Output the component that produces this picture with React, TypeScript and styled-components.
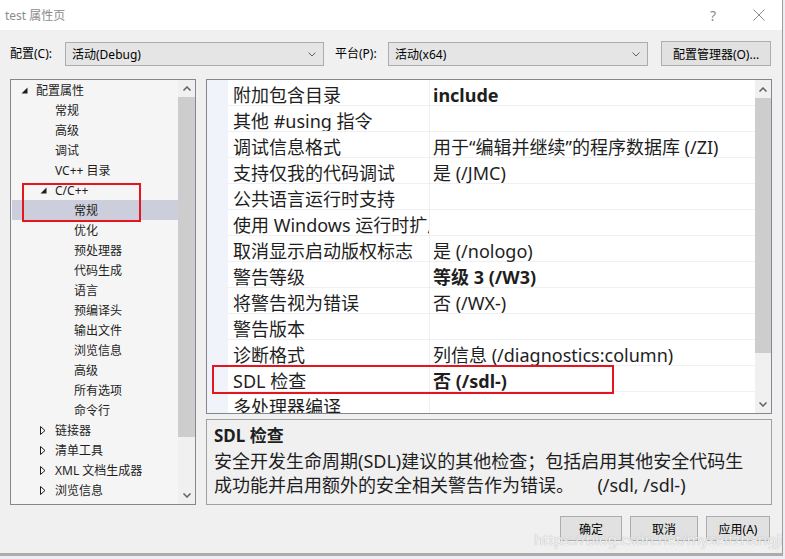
import React from "react";
import styled, { createGlobalStyle } from "styled-components";

const GlobalStyle = createGlobalStyle`
  html, body {
    margin: 0;
    padding: 0;
    background: #eceef3;
  }
  body {
    font-family: "Noto Sans", "Noto Sans CJK SC", sans-serif;
    color: #000;
  }
`;

const Dialog = styled.div`
  position: relative;
  width: 783px;
  height: 556px;
  box-sizing: border-box;
  background: #f0f0f0;
  border-right: 1px solid #9c9c9c;
  border-bottom: 3px solid #acacac;
  display: flex;
  flex-direction: column;
  overflow: hidden;
`;

const TitleBar = styled.div`
  height: 30px;
  flex: none;
  background: #fff;
  display: flex;
  align-items: center;
  padding-left: 5px;
  font-size: 12px;
  color: #8c8c8c;
`;

const TitleText = styled.span`
  flex: 1;
`;

const TitleButton = styled.div`
  width: 46px;
  height: 30px;
  display: flex;
  align-items: center;
  justify-content: center;
  color: #8c8c8c;
  font-size: 14px;
`;

const Toolbar = styled.div`
  height: 49px;
  flex: none;
  box-sizing: border-box;
  display: flex;
  align-items: flex-start;
  padding: 12px 10px 0;
  font-size: 12px;
`;

const FieldLabel = styled.span<{ $w: number }>`
  width: ${(p) => p.$w}px;
  height: 24px;
  line-height: 24px;
  flex: none;
`;

const Combo = styled.div<{ $w: number }>`
  width: ${(p) => p.$w}px;
  height: 24px;
  flex: none;
  box-sizing: border-box;
  border: 1px solid #acacac;
  background: #e5e5e5;
  display: flex;
  align-items: center;
  padding: 0 7px 0 6px;
  margin-right: 11px;
`;

const ComboText = styled.span`
  flex: 1;
`;

const PushButton = styled.button<{ $w: number }>`
  width: ${(p) => p.$w}px;
  height: 25px;
  flex: none;
  box-sizing: border-box;
  border: 1px solid #adadad;
  background: #e1e1e1;
  font-family: inherit;
  font-size: 12px;
  color: #000;
  padding: 0;
`;

const ManagerButton = styled(PushButton)`
  margin: -1px 0 0 2px;
`;

const Main = styled.div`
  height: 426px;
  flex: none;
  display: flex;
  gap: 10px;
  padding: 0 10px;
`;

const TreePanel = styled.div`
  position: relative;
  width: 186px;
  flex: none;
  box-sizing: border-box;
  border: 1px solid #828790;
  background: #f5f5f5;
  display: flex;
`;

const TreeList = styled.ul`
  flex: 1;
  margin: 0;
  padding: 0 0 0 1px;
  list-style: none;
  overflow: hidden;
`;

const TreeRow = styled.li<{ $level: number; $selected?: boolean }>`
  height: 20px;
  display: flex;
  align-items: center;
  padding-left: ${(p) => 9 + p.$level * 19}px;
  background: ${(p) => (p.$selected ? "#cccedb" : "transparent")};
  font-size: 12px;
  color: #1e1e1e;
  white-space: nowrap;
`;

const Expander = styled.span`
  width: 15px;
  height: 20px;
  flex: none;
  display: flex;
  align-items: center;
`;

const ScrollBar = styled.div<{ $w: number }>`
  width: ${(p) => p.$w}px;
  flex: none;
  background: #f0f0f0;
  display: flex;
  flex-direction: column;
`;

const ScrollArrow = styled.div<{ $h: number }>`
  height: ${(p) => p.$h}px;
  flex: none;
  display: flex;
  align-items: center;
  justify-content: center;
`;

const ScrollTrack = styled.div`
  flex: 1;
  position: relative;
`;

const ScrollThumb = styled.div`
  position: absolute;
  left: 0;
  right: 0;
  background: #cdcdcd;
`;

const RightColumn = styled.div`
  flex: 1;
  display: flex;
  flex-direction: column;
  gap: 5px;
`;

const GridPanel = styled.div`
  position: relative;
  height: 335px;
  flex: none;
  box-sizing: border-box;
  border: 1px solid #828790;
  background: #fff;
  display: flex;
  overflow: hidden;
`;

const Gutter = styled.div`
  width: 21px;
  flex: none;
  background: #f0f4fa;
`;

const Rows = styled.div`
  flex: 1;
`;

const PropRow = styled.div`
  height: 26px;
  box-sizing: border-box;
  display: flex;
  border-bottom: 1px solid #eef0f3;
  font-size: 18px;
  line-height: 20px;
  color: #1e1e1e;
`;

const NameCell = styled.div`
  width: 202px;
  flex: none;
  box-sizing: border-box;
  padding: 5px 0 0 5px;
  border-right: 1px solid #eef0f3;
  white-space: nowrap;
  overflow: hidden;
`;

const ValueCell = styled.div<{ $bold?: boolean }>`
  flex: 1;
  padding: 5px 0 0 3px;
  white-space: nowrap;
  font-weight: ${(p) => (p.$bold ? 700 : 400)};
`;

const Highlight = styled.div`
  position: absolute;
  box-sizing: border-box;
  border: 2px solid #e5141e;
  pointer-events: none;
`;

const DescPanel = styled.div`
  height: 86px;
  flex: none;
  box-sizing: border-box;
  border: 1px solid #a0a0a0;
  padding: 5px 7px;
  color: #1e1e1e;
`;

const DescTitle = styled.div`
  font-size: 17px;
  font-weight: 700;
  line-height: 22px;
  margin-bottom: 2px;
`;

const DescLine = styled.div`
  font-size: 18px;
  line-height: 24px;
  white-space: pre;
`;

const Footer = styled.div`
  display: flex;
  justify-content: flex-end;
  gap: 8px;
  padding: 11px 12px 0 0;
`;

const Watermark = styled.div`
  position: absolute;
  left: 534px;
  top: 529px;
  font-size: 15px;
  color: rgba(255, 255, 255, 0.85);
  text-shadow: 0 0 1px rgba(120, 120, 120, 0.7);
  pointer-events: none;
  white-space: nowrap;
`;

const Chevron = ({ up, color = "#606060", weight = 1.5, w = 8 }: { up?: boolean; color?: string; weight?: number; w?: number }) => (
  <svg width={w} height={5} viewBox="0 0 8 5">
    <path d={up ? "M0.5 4.5 L4 1 L7.5 4.5" : "M0.5 0.5 L4 4 L7.5 0.5"} fill="none" stroke={color} strokeWidth={weight} />
  </svg>
);

const Expanded = () => (
  <svg width="7" height="7" viewBox="0 0 7 7">
    <polygon points="6.5,0.5 6.5,6.5 0.5,6.5" fill="#1e1e1e" />
  </svg>
);

const Collapsed = () => (
  <svg width="6" height="9" viewBox="0 0 6 9">
    <polygon points="0.5,0.5 5,4.5 0.5,8.5" fill="none" stroke="#1e1e1e" strokeWidth="1" />
  </svg>
);

const CloseIcon = () => (
  <svg width="12" height="12" viewBox="0 0 12 12">
    <path d="M0.5 0.5 L11.5 11.5 M11.5 0.5 L0.5 11.5" stroke="#8c8c8c" strokeWidth="1" />
  </svg>
);

type TreeItem = { label: string; level: number; state?: "open" | "closed"; selected?: boolean };

const tree: TreeItem[] = [
  { label: "配置属性", level: 0, state: "open" },
  { label: "常规", level: 1 },
  { label: "高级", level: 1 },
  { label: "调试", level: 1 },
  { label: "VC++ 目录", level: 1 },
  { label: "C/C++", level: 1, state: "open" },
  { label: "常规", level: 2, selected: true },
  { label: "优化", level: 2 },
  { label: "预处理器", level: 2 },
  { label: "代码生成", level: 2 },
  { label: "语言", level: 2 },
  { label: "预编译头", level: 2 },
  { label: "输出文件", level: 2 },
  { label: "浏览信息", level: 2 },
  { label: "高级", level: 2 },
  { label: "所有选项", level: 2 },
  { label: "命令行", level: 2 },
  { label: "链接器", level: 1, state: "closed" },
  { label: "清单工具", level: 1, state: "closed" },
  { label: "XML 文档生成器", level: 1, state: "closed" },
  { label: "浏览信息", level: 1, state: "closed" },
];

const props: { name: string; value: string; bold?: boolean }[] = [
  { name: "附加包含目录", value: "include", bold: true },
  { name: "其他 #using 指令", value: "" },
  { name: "调试信息格式", value: "用于“编辑并继续”的程序数据库 (/ZI)" },
  { name: "支持仅我的代码调试", value: "是 (/JMC)" },
  { name: "公共语言运行时支持", value: "" },
  { name: "使用 Windows 运行时扩展", value: "" },
  { name: "取消显示启动版权标志", value: "是 (/nologo)" },
  { name: "警告等级", value: "等级 3 (/W3)", bold: true },
  { name: "将警告视为错误", value: "否 (/WX-)" },
  { name: "警告版本", value: "" },
  { name: "诊断格式", value: "列信息 (/diagnostics:column)" },
  { name: "SDL 检查", value: "否 (/sdl-)", bold: true },
  { name: "多处理器编译", value: "" },
];

const VScroll = ({ width, arrow, top, height }: { width: number; arrow: number; top: number; height: number }) => (
  <ScrollBar $w={width}>
    <ScrollArrow $h={arrow}>
      <Chevron up />
    </ScrollArrow>
    <ScrollTrack>
      <ScrollThumb style={{ top, height }} />
    </ScrollTrack>
    <ScrollArrow $h={arrow}>
      <Chevron />
    </ScrollArrow>
  </ScrollBar>
);

export default function App() {
  return (
    <>
      <GlobalStyle />
      <Dialog>
        <TitleBar>
          <TitleText>test 属性页</TitleText>
          <TitleButton>?</TitleButton>
          <TitleButton>
            <CloseIcon />
          </TitleButton>
        </TitleBar>

        <Toolbar>
          <FieldLabel $w={55}>配置(C):</FieldLabel>
          <Combo $w={259}>
            <ComboText>活动(Debug)</ComboText>
            <Chevron weight={1} />
          </Combo>
          <FieldLabel $w={53}>平台(P):</FieldLabel>
          <Combo $w={260}>
            <ComboText>活动(x64)</ComboText>
            <Chevron weight={1} />
          </Combo>
          <ManagerButton $w={110}>配置管理器(O)...</ManagerButton>
        </Toolbar>

        <Main>
          <TreePanel>
            <TreeList>
              {tree.map((item, i) => (
                <TreeRow key={i} $level={item.level} $selected={item.selected}>
                  <Expander>
                    {item.state === "open" && <Expanded />}
                    {item.state === "closed" && <Collapsed />}
                  </Expander>
                  {item.label}
                </TreeRow>
              ))}
            </TreeList>
            <VScroll width={17} arrow={17} top={0} height={340} />
            <Highlight style={{ left: 11, top: 103, width: 119, height: 39 }} />
          </TreePanel>

          <RightColumn>
            <GridPanel>
              <Gutter />
              <Rows>
                {props.map((p, i) => (
                  <PropRow key={i}>
                    <NameCell>{p.name}</NameCell>
                    <ValueCell $bold={p.bold}>{p.value}</ValueCell>
                  </PropRow>
                ))}
              </Rows>
              <VScroll width={16} arrow={18} top={0} height={255} />
              <Highlight style={{ left: 5, top: 285, width: 402, height: 29 }} />
            </GridPanel>

            <DescPanel>
              <DescTitle>SDL 检查</DescTitle>
              <DescLine>安全开发生命周期(SDL)建议的其他检查；包括启用其他安全代码生</DescLine>
              <DescLine>{"成功能并启用额外的安全相关警告作为错误。     (/sdl, /sdl-)"}</DescLine>
            </DescPanel>
          </RightColumn>
        </Main>

        <Footer>
          <PushButton $w={62}>确定</PushButton>
          <PushButton $w={68}>取消</PushButton>
          <PushButton $w={64}>应用(A)</PushButton>
        </Footer>

        <Watermark>https://blog.csdn.net/myselfzhangji</Watermark>
      </Dialog>
    </>
  );
}
